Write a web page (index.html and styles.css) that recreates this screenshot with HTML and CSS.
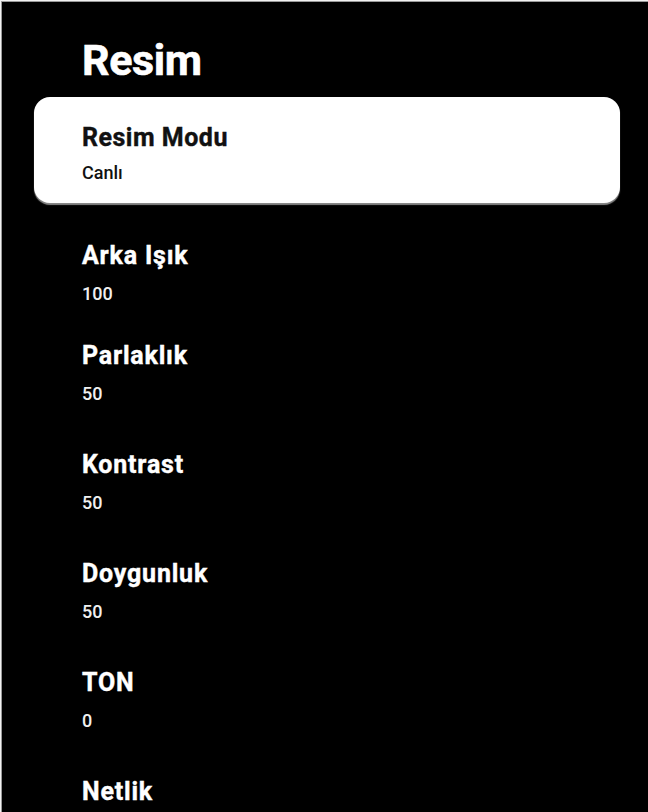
FILE: index.html
```html
<!DOCTYPE html>
<html lang="tr">
<head>
<meta charset="utf-8">
<title>Resim</title>
<link rel="stylesheet" href="styles.css">
</head>
<body>
<main class="screen">
  <h1 class="title">Resim</h1>
  <div class="card">
    <div class="card-label">Resim Modu</div>
    <div class="card-value">Canlı</div>
  </div>
  <ul class="list">
    <li class="item"><div class="label">Arka Işık</div><div class="value">100</div></li>
    <li class="item"><div class="label">Parlaklık</div><div class="value">50</div></li>
    <li class="item"><div class="label">Kontrast</div><div class="value">50</div></li>
    <li class="item"><div class="label">Doygunluk</div><div class="value">50</div></li>
    <li class="item"><div class="label">TON</div><div class="value">0</div></li>
    <li class="item"><div class="label">Netlik</div></li>
  </ul>
</main>
</body>
</html>
```

FILE: styles.css
```css
html, body {
  margin: 0;
  padding: 0;
  height: 100%;
  background: #f2f2f2;
  overflow: hidden;
}
body {
  padding: 1px 0 0 1px;
  box-sizing: border-box;
  font-family: Roboto, "Liberation Sans", sans-serif;
}
.screen {
  box-sizing: border-box;
  height: 100%;
  background: #000;
  border-top: 1px solid #9a9a9a;
  border-left: 1px solid #9a9a9a;
  padding-top: 33px;
  color: #fff;
  overflow: hidden;
}
.title {
  margin: 0 0 12px 0;
  padding-left: 80px;
  font-size: 43px;
  line-height: 50px;
  font-weight: 700;
  letter-spacing: -0.4px;
  -webkit-text-stroke: 0.6px currentColor;
}
.card {
  margin: 0 28px 0 32px;
  height: 106px;
  box-sizing: border-box;
  padding: 26px 0 0 48px;
  background: #fff;
  border-radius: 16px;
  color: #111;
  box-shadow: 0 2px 1px rgba(150, 150, 150, 0.9);
}
.card-label {
  font-size: 25px;
  line-height: 30px;
  font-weight: 700;
  letter-spacing: 0.5px;
  -webkit-text-stroke: 0.4px currentColor;
}
.card-value {
  margin-top: 9px;
  font-size: 18px;
  line-height: 22px;
  font-weight: 500;
}
.list {
  list-style: none;
  margin: 38px 0 0 0;
  padding: 0 0 0 80px;
}
.item {
  padding-bottom: 45px;
}
.item:first-child {
  padding-bottom: 36px;
}
.item:last-child {
  padding-bottom: 0;
}
.label {
  font-size: 25px;
  line-height: 30px;
  font-weight: 700;
  letter-spacing: 0.8px;
  -webkit-text-stroke: 0.4px currentColor;
}
.value {
  margin-top: 12px;
  font-size: 18px;
  line-height: 22px;
  font-weight: 500;
  color: #f0f0f0;
}
```
